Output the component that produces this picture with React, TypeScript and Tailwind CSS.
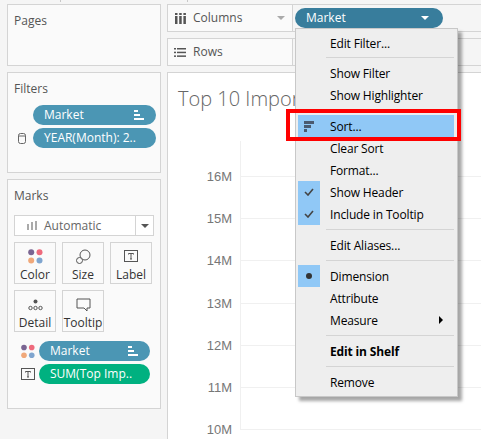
// Tableau worksheet with the Market pill's context menu open
const ui = "font-['Open_Sans','Noto_Sans',sans-serif]";

const SortBars = () => (
  <svg width="10" height="10" viewBox="0 0 10 10" fill="currentColor">
    <rect x="0" y="0" width="4" height="2" />
    <rect x="0" y="4" width="6" height="2" />
    <rect x="0" y="8" width="10" height="2" />
  </svg>
);

const ColorDots = () => (
  <svg width="15" height="15" viewBox="0 0 15 15">
    <circle cx="3.2" cy="3.2" r="3" fill="#7a6592" />
    <circle cx="11.5" cy="3.2" r="3" fill="#ee6a7c" />
    <circle cx="3.2" cy="11.5" r="3" fill="#f0a87a" />
    <circle cx="11.5" cy="11.5" r="3" fill="#7fa5cf" />
  </svg>
);

const TextBox = () => (
  <svg width="14" height="13" viewBox="0 0 14 13" fill="none" stroke="#555">
    <rect x="0.5" y="0.5" width="13" height="11" />
    <path d="M4.5 3.5h5M7 3.5v5.5M6 9h2M4.5 3.5v1M9.5 3.5v1" />
  </svg>
);

const Pill = ({
  label,
  color = "bg-[#4b96b4]",
  sort,
}: {
  label: string;
  color?: string;
  sort?: boolean;
}) => (
  <div className={`flex h-[20px] flex-1 items-center justify-between rounded-full pl-[11px] pr-[12px] text-[12px] text-white ${color}`}>
    <span className="whitespace-nowrap">{label}</span>
    {sort && <SortBars />}
  </div>
);

const MarkCard = ({ label, icon }: { label: string; icon: React.ReactNode }) => (
  <div className="flex h-[42px] w-[42px] flex-col items-center border border-[#d4d4d4] pt-[6px] text-[12px] leading-[16px] text-[#333]">
    <div className="flex h-[16px] items-center">{icon}</div>
    <span className="mt-[3px]">{label}</span>
  </div>
);

const Panel = ({
  title,
  className,
  children,
}: {
  title: string;
  className: string;
  children?: React.ReactNode;
}) => (
  <div className={`border border-[#d4d4d4] bg-[#fafafa] ${className}`}>
    <div className="pl-[6px] pt-[7px] text-[12px] leading-[17px] text-[#555]">{title}</div>
    {children}
  </div>
);

const Separator = ({ tight }: { tight?: boolean }) => (
  <div className={`mb-[4px] ml-[30px] mr-[3px] h-px bg-[#d4d4d4] ${tight ? "mt-[3px]" : "mt-[4px]"}`} />
);

const Item = ({
  label,
  bold,
  active,
  mark,
  arrow,
  icon,
}: {
  label: string;
  bold?: boolean;
  active?: boolean;
  mark?: React.ReactNode;
  arrow?: boolean;
  icon?: React.ReactNode;
}) => (
  <div className={`relative flex h-[22px] items-center pl-[34px] pt-[2px] text-[12px] tracking-[-0.15px] text-black ${bold ? "font-bold" : ""}`}>
    {active && <div className="absolute inset-y-0 left-[2px] right-[3px] bg-[#90c8f6]" />}
    {mark && (
      <div className="absolute left-[2px] top-0 flex h-[22px] w-[22px] items-center justify-center bg-[#90c8f6] text-[#444]">
        {mark}
      </div>
    )}
    {icon && <div className="absolute left-[8px] top-[6px]">{icon}</div>}
    <span className="relative">{label}</span>
    {arrow && <div className="absolute right-[14px] top-[7px] h-0 w-0 border-y-[4px] border-l-[4px] border-y-transparent border-l-black" />}
  </div>
);

const Check = () => (
  <svg width="10" height="8" viewBox="0 0 10 8" fill="none" stroke="#444" strokeWidth="1.6">
    <path d="M1 4l3 3 5-6" />
  </svg>
);

const ticks = ["16M", "15M", "14M", "13M", "12M", "11M", "10M"];

export default function App() {
  return (
    <div className={`relative flex h-[439px] w-[481px] gap-[6px] overflow-hidden bg-[#f5f5f5] pl-[7px] pt-[4px] ${ui}`}>
      {/* left cards */}
      <div className="flex w-[154px] shrink-0 flex-col gap-[6px]">
        <Panel title="Pages" className="h-[62px]" />
        <Panel title="Filters" className="h-[101px]">
          <div className="mt-[8px] flex flex-col gap-[3px] pr-[4px]">
            <div className="flex pl-[25px]">
              <Pill label="Market" sort />
            </div>
            <div className="flex items-center pl-[10px]">
              <svg width="8" height="11" viewBox="0 0 8 11" fill="none" stroke="#666" className="mr-[7px]">
                <rect x="0.5" y="0.5" width="7" height="10" rx="2" />
                <path d="M0.5 3h7" />
              </svg>
              <Pill label="YEAR(Month): 2.." />
            </div>
          </div>
        </Panel>
        <Panel title="Marks" className="h-[230px]">
          <div className="mx-[6px] mt-[11px] flex h-[21px] w-[140px] items-center border border-[#d4d4d4] bg-white text-[12px] text-[#666]">
            <svg width="10" height="9" viewBox="0 0 10 9" fill="#aaa" className="ml-[12px] mr-[7px]">
              <rect x="0" y="3" width="2" height="6" />
              <rect x="4" y="1" width="2" height="8" />
              <rect x="8" y="0" width="2" height="9" />
            </svg>
            <span className="flex-1">Automatic</span>
            <div className="flex h-full w-[18px] items-center justify-center border-l border-[#d4d4d4]">
              <div className="h-0 w-0 border-x-[4px] border-t-[4px] border-x-transparent border-t-[#555]" />
            </div>
          </div>
          <div className="ml-[6px] mt-[6px] grid w-[140px] grid-cols-[42px_42px_42px] gap-x-[6px] gap-y-[6px]">
            <MarkCard label="Color" icon={<ColorDots />} />
            <MarkCard
              label="Size"
              icon={
                <svg width="15" height="15" viewBox="0 0 15 15" fill="none" stroke="#555">
                  <circle cx="9" cy="6" r="5" fill="#fafafa" />
                  <circle cx="3.5" cy="11.5" r="3" fill="#fafafa" />
                </svg>
              }
            />
            <MarkCard label="Label" icon={<TextBox />} />
            <MarkCard
              label="Detail"
              icon={
                <svg width="15" height="12" viewBox="0 0 15 12">
                  <circle cx="7.5" cy="2.5" r="2" fill="#555" />
                  <g fill="none" stroke="#555">
                    <circle cx="2.5" cy="9" r="1.7" />
                    <circle cx="7.5" cy="9" r="1.7" />
                    <circle cx="12.5" cy="9" r="1.7" />
                  </g>
                </svg>
              }
            />
            <MarkCard
              label="Tooltip"
              icon={
                <svg width="15" height="14" viewBox="0 0 15 14" fill="none" stroke="#555">
                  <path d="M1 1h13v9h-3v3l-3-3H1z" />
                </svg>
              }
            />
          </div>
          <div className="mt-[9px] flex flex-col gap-[3px] pr-[10px]">
            <div className="flex items-center pl-[13px]">
              <div className="mr-[4px] flex w-[14px] shrink-0 items-center justify-center">
                <ColorDots />
              </div>
              <Pill label="Market" sort />
            </div>
            <div className="flex items-center pl-[13px]">
              <div className="mr-[4px] flex w-[14px] shrink-0 items-center justify-center">
                <TextBox />
              </div>
              <Pill label="SUM(Top Imp.." color="bg-[#00b180]" />
            </div>
          </div>
        </Panel>
      </div>

      {/* shelves and view */}
      <div className="flex flex-1 flex-col gap-[6px]">
        <div className="flex h-[28px] items-center border-y border-l border-[#d4d4d4]">
          <div className="flex h-full w-[125px] items-center justify-between border-r border-[#d4d4d4] bg-[#fafafa] pl-[7px] pr-[7px] text-[12px] text-[#555]">
            <div className="flex items-center">
              <svg width="11" height="11" viewBox="0 0 11 11" fill="#555" className="mr-[7px]">
                <rect x="0" y="0" width="2.5" height="2" />
                <rect x="0" y="3" width="2.5" height="8" />
                <rect x="4.2" y="0" width="2.5" height="2" />
                <rect x="4.2" y="3" width="2.5" height="8" />
                <rect x="8.4" y="0" width="2.5" height="2" />
                <rect x="8.4" y="3" width="2.5" height="8" />
              </svg>
              Columns
            </div>
            <div className="h-0 w-0 border-x-[4px] border-t-[4px] border-x-transparent border-t-[#aaa]" />
          </div>
          <div className="ml-[2px] flex h-[20px] w-[148px] items-center justify-between rounded-full bg-[#387d9c] pl-[11px] pr-[14px] text-[12px] text-white">
            Market
            <div className="h-0 w-0 border-x-[4px] border-t-[4px] border-x-transparent border-t-white" />
          </div>
        </div>
        <div className="flex h-[28px] items-center border-y border-l border-[#d4d4d4]">
          <div className="flex h-full w-[125px] items-center border-r border-[#d4d4d4] bg-[#fafafa] pl-[6px] text-[12px] text-[#555]">
            <svg width="12" height="9" viewBox="0 0 12 9" fill="#555" className="mr-[7px]">
              <rect x="0" y="0" width="2" height="1.5" />
              <rect x="3" y="0" width="9" height="1.5" />
              <rect x="0" y="3.7" width="2" height="1.5" />
              <rect x="3" y="3.7" width="9" height="1.5" />
              <rect x="0" y="7.4" width="2" height="1.5" />
              <rect x="3" y="7.4" width="9" height="1.5" />
            </svg>
            Rows
          </div>
        </div>
        <div className="flex-1 border-l border-t border-[#d4d4d4] bg-white">
          <div className="h-[68px] pl-[10px] pt-[12px] text-[20px] font-light leading-[27px] whitespace-nowrap text-[#666]">
            Top 10 Imports
          </div>
          <div className="ml-[72px] flex h-[36px] border-l border-[#f0f0f0]" />
          {ticks.map((tick, i) => (
            <div key={tick} className={`flex ${i === 0 ? "h-0" : "h-[42.2px]"} items-end`}>
              <span className="w-[64px] translate-y-[9px] text-right font-['Liberation_Sans',sans-serif] text-[13px] leading-[18px] text-[#777]">
                {tick}
              </span>
              <div className="ml-[8px] h-full flex-1 border-b border-l border-[#f0f0f0]" />
            </div>
          ))}
        </div>
      </div>

      {/* context menu */}
      <div className="absolute left-[295px] top-[28px] w-[163px] border border-[#c8c8c8] bg-[#eeeeee] py-[3px] shadow-[4px_4px_3px_rgba(0,0,0,0.35)]">
        <Item label="Edit Filter..." />
        <Separator tight />
        <Item label="Show Filter" />
        <Item label="Show Highlighter" />
        <div className="h-[9px]" />
        <Item
          label="Sort..."
          active
          icon={
            <svg width="10" height="11" viewBox="0 0 10 11" fill="#4a5a70">
              <rect x="0" y="0" width="10" height="3" />
              <rect x="0" y="4" width="7" height="3" />
              <rect x="0" y="8" width="3" height="3" />
            </svg>
          }
        />
        <Item label="Clear Sort" />
        <Item label="Format..." />
        <Item label="Show Header" mark={<Check />} />
        <Item label="Include in Tooltip" mark={<Check />} />
        <Separator />
        <Item label="Edit Aliases..." />
        <Separator />
        <Item label="Dimension" mark={<div className="h-[6px] w-[6px] rounded-full bg-[#333]" />} />
        <Item label="Attribute" />
        <Item label="Measure" arrow />
        <Separator />
        <Item label="Edit in Shelf" bold />
        <Separator />
        <Item label="Remove" />
      </div>

      {/* red callout */}
      <div className="absolute left-[286px] top-[109px] h-[32px] w-[175px] border-4 border-[#ff0000]" />
      {/* stubs of the splitters at the very top edge */}
      <div className="absolute left-[60px] top-0 h-[2px] w-px bg-[#c8c8c8]" />
      <div className="absolute left-[187px] top-0 h-[2px] w-px bg-[#c8c8c8]" />
    </div>
  );
}
